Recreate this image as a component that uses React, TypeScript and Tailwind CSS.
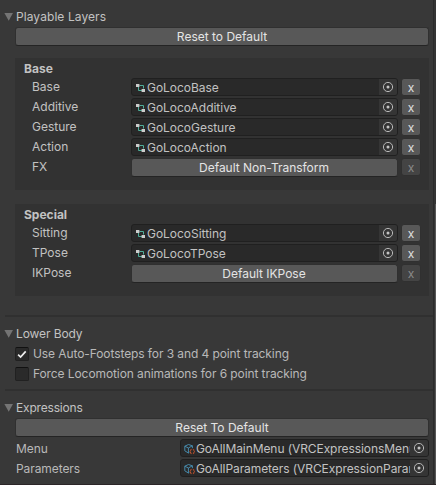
import type { ReactNode } from "react";

function Foldout({ children, className = "" }: { children: ReactNode; className?: string }) {
  return (
    <div className="flex h-5 items-center">
      <svg width="10" height="8" viewBox="0 0 10 8" className="ml-1 mr-0.5 shrink-0">
        <path d="M0.4 0H9L4.7 7.8Z" fill="#747474" />
      </svg>
      <span className={className}>{children}</span>
    </div>
  );
}

function WideButton({ children, className = "" }: { children: ReactNode; className?: string }) {
  return (
    <button
      className={`flex h-[19px] items-center justify-center rounded-[3px] border border-[#303030] border-b-[#242424] bg-[#585858] text-[#e4e4e4] ${className}`}
    >
      {children}
    </button>
  );
}

function ControllerIcon() {
  return (
    <svg width="10" height="10" viewBox="0 0 10 10" className="ml-1 mr-px mt-0.5 shrink-0">
      <path d="M3.5 2.5H7.5V5.5M2.5 4V7.5H6" fill="none" stroke="#4fae9b" strokeWidth="1" />
      <rect x="0" y="1" width="3.4" height="3" fill="#cccccc" />
      <rect x="5.6" y="6" width="3.4" height="3" fill="#cccccc" />
    </svg>
  );
}

function AssetIcon() {
  return (
    <svg width="11" height="12" viewBox="0 0 11 12" className="ml-[3px] mr-px mt-px shrink-0">
      <path
        d="M0.8 3.2L4.5 1.5L8.4 2.8V5.2M0.8 3.2V7.8L4.4 10V5M0.8 3.2L4.4 5L8.4 2.8M4.4 10L5.3 9.5"
        fill="none"
        stroke="#4789aa"
        strokeWidth="1"
      />
      <path
        d="M7.6 6.4H7.2Q6.6 6.4 6.6 7V7.8L6 8.4L6.6 9V10Q6.6 10.6 7.2 10.6H7.6M8.9 6.4H9.3Q9.9 6.4 9.9 7V7.8L10.5 8.4L9.9 9V10Q9.9 10.6 9.3 10.6H8.9"
        fill="none"
        stroke="#c9562f"
        strokeWidth="1"
      />
    </svg>
  );
}

function ObjectField({ icon, value, className = "" }: { icon: ReactNode; value: string; className?: string }) {
  return (
    <div
      className={`flex h-[18px] items-center overflow-hidden rounded-[3px] border border-[#202020] bg-[#292929] ${className}`}
    >
      {icon}
      <span className="min-w-0 flex-1 overflow-hidden whitespace-nowrap pt-px">{value}</span>
      <span className="flex h-4 w-[18px] shrink-0 items-center justify-center bg-[#353535]">
        <svg width="12" height="12" viewBox="0 0 12 12">
          <circle cx="6" cy="6" r="4.6" fill="none" stroke="#b8b8b8" strokeWidth="1" />
          <circle cx="6" cy="6" r="1.5" fill="#c4c4c4" />
        </svg>
      </span>
    </div>
  );
}

function LayerRow({ label, value, fallback }: { label: string; value?: string; fallback?: string }) {
  return (
    <div className="flex h-5 items-start pl-[17px]">
      <span className="w-[99px] leading-[18px]">{label}</span>
      {value ? (
        <ObjectField icon={<ControllerIcon />} value={value} className="w-[267px] tracking-[-0.03px]" />
      ) : (
        <WideButton className="w-[267px] pr-px tracking-[-0.02px]">{fallback}</WideButton>
      )}
      <button
        className={`ml-[3px] flex h-[18px] w-5 items-center justify-center rounded-[3px] border border-[#303030] pt-px ${
          value ? "bg-[#585858] text-[#e0e0e0]" : "bg-[#444444] text-[#8b8b8b]"
        }`}
      >
        x
      </button>
    </div>
  );
}

function Toggle({ checked, children }: { checked?: boolean; children: ReactNode }) {
  return (
    <div className="flex h-5 items-center pl-[15px]">
      <span className="flex size-[14px] items-center justify-center rounded-[2px] border border-[#212121] border-t-[#111111] bg-[#2a2a2a]">
        {checked && (
          <svg width="10" height="9" viewBox="0 0 10 9">
            <path d="M1.1 4.6L3.6 7L8.7 1.4" fill="none" stroke="#eeeeee" strokeWidth="1.7" />
          </svg>
        )}
      </span>
      <span className="ml-1 tracking-[-0.09px] text-[#b8b8b8]">{children}</span>
    </div>
  );
}

function AssetRow({ label, value }: { label: string; value: string }) {
  return (
    <div className="flex h-5 items-start pl-4 tracking-[-0.08px]">
      <span className="w-[164px] leading-[19px] text-[#b8b8b8]">{label}</span>
      <ObjectField icon={<AssetIcon />} value={value} className="w-[249px]" />
    </div>
  );
}

export default function App() {
  return (
    <div className="flex h-[485px] w-[436px] overflow-hidden border-b border-[#2c2628] bg-[#383838] font-['Inter',sans-serif] text-[12px] leading-4 text-[#c2c2c2]">
      <main className="flex w-[433px] shrink-0 flex-col">
        <div className="mt-[7px]">
          <Foldout className="tracking-[0.08px]">Playable Layers</Foldout>
        </div>
        <WideButton className="ml-[15px] w-[414px]">Reset to Default</WideButton>

        <section className="ml-[15px] mt-3 h-[132px] w-[414px] bg-[#323232]">
          <h2 className="h-5 pl-[9px] pt-[3px] font-bold">Base</h2>
          <LayerRow label="Base" value="GoLocoBase" />
          <LayerRow label="Additive" value="GoLocoAdditive" />
          <LayerRow label="Gesture" value="GoLocoGesture" />
          <LayerRow label="Action" value="GoLocoAction" />
          <LayerRow label="FX" fallback="Default Non-Transform" />
        </section>

        <section className="ml-[15px] mt-[14px] h-[92px] w-[414px] bg-[#323232]">
          <h2 className="h-5 pl-[9px] pt-[3px] font-bold">Special</h2>
          <LayerRow label="Sitting" value="GoLocoSitting" />
          <LayerRow label="TPose" value="GoLocoTPose" />
          <LayerRow label="IKPose" fallback="Default IKPose" />
        </section>

        <hr className="ml-[5px] mt-[19px] h-0.5 border-0 bg-[#303030]" />
        <div className="mt-[7px]">
          <Foldout className="tracking-[-0.1px]">Lower Body</Foldout>
        </div>
        <Toggle checked>Use Auto-Footsteps for 3 and 4 point tracking</Toggle>
        <Toggle>Force Locomotion animations for 6 point tracking</Toggle>
        <hr className="ml-[5px] mt-[5px] h-0.5 border-0 bg-[#303030]" />
        <div className="mt-[7px]">
          <Foldout className="tracking-[-0.18px]">Expressions</Foldout>
        </div>
        <WideButton className="ml-[15px] w-[414px]">Reset To Default</WideButton>
        <div className="mt-0.5">
          <AssetRow label="Menu" value="GoAllMainMenu (VRCExpressionsMenu)" />
          <AssetRow label="Parameters" value="GoAllParameters (VRCExpressionParameters)" />
        </div>
      </main>
      <aside className="flex w-[3px] shrink-0 flex-col border-l border-[#2b2b2b] bg-[#343434]">
        <div className="ml-px mt-[204px] flex-1 bg-[#585858]" />
      </aside>
    </div>
  );
}
